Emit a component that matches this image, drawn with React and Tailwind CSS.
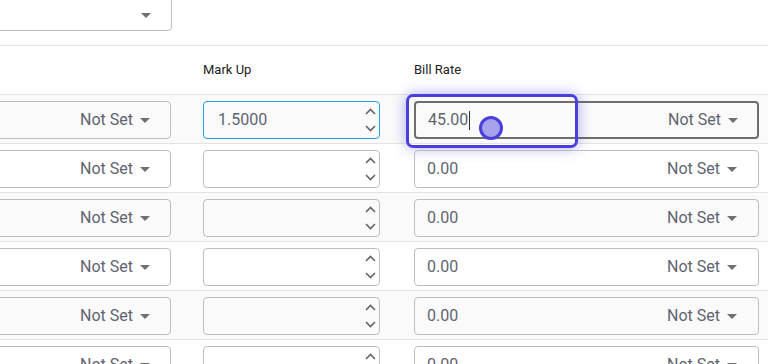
const rows = [
  { markup: '1.5000', bill: '45.00', active: true },
  { markup: '', bill: '0.00' },
  { markup: '', bill: '0.00' },
  { markup: '', bill: '0.00' },
  { markup: '', bill: '0.00' },
  { markup: '', bill: '0.00' },
]

function Caret() {
  return (
    <svg width="10" height="5" viewBox="0 0 10 5" className="shrink-0">
      <path d="M0 0h10L5 5z" fill="#707070" />
    </svg>
  )
}

function Spinner() {
  return (
    <div className="flex flex-col items-center justify-between py-[6px] h-full">
      <svg width="11" height="7" viewBox="0 0 11 7">
        <path d="M1 6l4.5-4.5L10 6" fill="none" stroke="#5f6470" strokeWidth="1.6" />
      </svg>
      <svg width="11" height="7" viewBox="0 0 11 7">
        <path d="M1 1l4.5 4.5L10 1" fill="none" stroke="#5f6470" strokeWidth="1.6" />
      </svg>
    </div>
  )
}

function Row({ row, shaded }) {
  return (
    <div
      className={`flex items-start border-b border-[#e3e3e3] pt-[6px] pb-[4px] ${shaded ? 'bg-[#fafafa]' : 'bg-white'}`}
    >
      <div className="-ml-4 flex h-[38px] w-[187px] items-center justify-end gap-[7px] rounded border border-[#bdbdbd] pr-[20px] text-[16px] text-[#5f6470]">
        <span>Not Set</span>
        <Caret />
      </div>
      <div
        className={`ml-[32px] flex h-[38px] w-[177px] items-center justify-between rounded pl-[14px] pr-[3px] text-[16px] text-[#5f6470] border ${row.active ? 'border-[#1ea1e6]' : 'border-[#bdbdbd]'}`}
      >
        <span>{row.markup}</span>
        <Spinner />
      </div>
      <div className="relative ml-[34px] w-[345px]">
        <div
          className={`flex h-[38px] items-center justify-between rounded pl-[12px] text-[16px] text-[#5f6470] ${row.active ? 'border-2 border-[#6e6e6e] pr-[19px]' : 'border border-[#bdbdbd] pr-[21px]'}`}
        >
          <span className="flex items-center">
            {row.bill}
            {row.active && <span className="ml-px h-[19px] w-px bg-[#333]" />}
          </span>
          <span className="flex items-center gap-[7px]">
            Not Set
            <Caret />
          </span>
        </div>
        {row.active && (
          <>
            <div className="pointer-events-none absolute -left-[8px] -top-[7px] h-[54px] w-[172px] rounded-[7px] border-[3px] border-[#4b3fdc] shadow-[0_0_14px_rgba(79,70,229,0.45)]" />
            <div className="pointer-events-none absolute left-[65px] top-[15px] h-[24px] w-[24px] rounded-full border-[3px] border-[#4b3fdc] bg-[#a7a2ec]" />
          </>
        )}
      </div>
    </div>
  )
}

export default function App() {
  return (
    <div className="h-[364px] w-[768px] overflow-hidden bg-white font-['Roboto',sans-serif]">
      <div className="flex h-[46px] flex-col border-b border-[#e3e3e3]">
        <div className="-ml-4 -mt-[10px] flex h-[41px] w-[188px] items-center justify-end rounded border border-[#bdbdbd] pr-[20px] pt-[10px]">
          <Caret />
        </div>
      </div>
      <div className="flex h-[49px] items-center border-b border-[#e3e3e3] text-[13px] text-[#212121]">
        <span className="ml-[203px] w-[211px]">Mark Up</span>
        <span>Bill Rate</span>
      </div>
      {rows.map((row, i) => (
        <Row key={i} row={row} shaded={i % 2 === 0} />
      ))}
    </div>
  )
}
